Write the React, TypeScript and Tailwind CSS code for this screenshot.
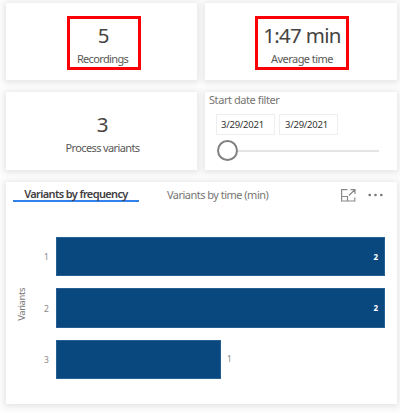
import React from "react";

const card = "bg-white shadow-[0_1px_6px_2px_rgba(0,0,0,0.09)]";

type MetricProps = {
  value: string;
  label: string;
  frame: string;
  valueClass?: string;
  labelClass: string;
};

function Metric({ value, label, frame, valueClass = "", labelClass }: MetricProps) {
  return (
    <div className={`flex flex-col items-center whitespace-nowrap border-[3px] ${frame}`}>
      <div className={`mt-[3px] h-[27px] text-[20.5px] leading-[26px] text-[#454341] ${valueClass}`}>{value}</div>
      <div className={`mt-[2px] text-[11px] leading-[16px] text-[#5a5856] ${labelClass}`}>{label}</div>
    </div>
  );
}

const rows = [
  { name: "1", count: 2, width: "w-[329px]" },
  { name: "2", count: 2, width: "w-[329px]" },
  { name: "3", count: 1, width: "w-[165px]" },
];

export default function App() {
  return (
    <main className="flex h-[413px] w-[400px] flex-col gap-3 overflow-hidden bg-[#fdfdfd] pl-1.5 pt-[3px] font-['Noto_Sans','Open_Sans',sans-serif]">
      <div className="flex h-[77px] shrink-0 gap-2">
        <section className={`${card} flex w-[191px] justify-center pl-[5px] pt-[13px]`}>
          <Metric value="5" label="Recordings" frame="h-[54px] w-[74px] border-[#fb0007] pr-[3px]" valueClass="pl-[2px]" labelClass="tracking-[-0.65px]" />
        </section>
        <section className={`${card} flex w-48 justify-center pl-[2px] pt-[13px]`}>
          <Metric value="1:47 min" label="Average time" frame="h-[54px] w-[94px] border-[#fb0007]" valueClass="tracking-[-0.7px]" labelClass="tracking-[-0.55px]" />
        </section>
      </div>

      <div className="flex h-[78px] shrink-0 gap-2">
        <section className={`${card} flex w-[191px] justify-center pl-[2px] pt-[13px]`}>
          <Metric value="3" label="Process variants" frame="h-[54px] border-transparent" labelClass="tracking-[-0.63px]" />
        </section>
        <section className={`${card} w-48 pl-1`}>
          <h2 className="text-[11px] leading-[15px] tracking-[-0.43px] text-[#777573]">Start date filter</h2>
          <div className="ml-[7px] mt-[7px] flex gap-1">
            <div className="h-[21px] w-[59px] border border-[#eeeeee] pl-1 text-[9.5px] leading-[19px] tracking-[-0.25px] text-[#333]">3/29/2021</div>
            <div className="h-[21px] w-[59px] border border-[#eeeeee] pl-[5px] text-[9.5px] leading-[19px] tracking-[-0.25px] text-[#333]">3/29/2021</div>
          </div>
          <div className="ml-2 mt-[5px] flex items-center">
            <div className="h-[21px] w-[21px] rounded-full border-2 border-[#808080] bg-white" />
            <div className="h-[2px] w-[141px] bg-[#e4e4e4]" />
          </div>
        </section>
      </div>

      <section className={`${card} h-[222px] w-[391px] shrink-0`}>
        <header className="flex h-[29px] items-start pl-[7px]">
          <div className="mt-[2px] h-[18px] w-[126px] whitespace-nowrap border-b-2 border-[#3380ef] text-center text-[11px] font-semibold leading-[19px] tracking-[-0.63px] text-[#42403f]">
            Variants by frequency
          </div>
          <div className="ml-7 mt-[4px] w-[103px] whitespace-nowrap text-[11px] leading-[17px] tracking-[-0.52px] text-[#777573]">
            Variants by time (min)
          </div>
          <svg className="ml-[71px] mt-[7px] h-[13px] w-[15px]" viewBox="0 0 15 13" fill="none" stroke="#8b8988" strokeWidth="1.2">
            <path d="M6.5 0.6H0.6V12H13.8V8.5M0.6 7.5H6.5V12M8 6.5L13.5 1M9.5 0.6H14V5" />
          </svg>
          <svg className="ml-3 mt-[11px] h-[4px] w-[15px]" viewBox="0 0 15 4" fill="#777573">
            <circle cx="1.7" cy="2" r="1.3" />
            <circle cx="7.5" cy="2" r="1.3" />
            <circle cx="13.3" cy="2" r="1.3" />
          </svg>
        </header>

        <div className="flex pt-[26px]">
          <div className="flex h-[142px] w-8 items-center justify-center">
            <span className="mt-[-7px] rotate-180 text-[9.5px] leading-[12px] tracking-[-0.45px] text-[#777573] [writing-mode:vertical-rl]">Variants</span>
          </div>
          <div className="flex flex-col gap-[12px]">
            {rows.map((row) => (
              <div key={row.name} className="flex h-[39.4px] items-center text-[8.5px] leading-none text-[#888]">
                <span className="w-[18px] pl-[6px] pt-[2px]">{row.name}</span>
                <div className={`${row.width} flex h-full items-center justify-end border border-[#285f92] bg-[#09477f] pr-[6px]`}>
                  {row.count === 2 && <span className="text-[8px] font-bold text-white">{row.count}</span>}
                </div>
                {row.count === 1 && <span className="pl-[6px]">{row.count}</span>}
              </div>
            ))}
          </div>
        </div>
      </section>
    </main>
  );
}
